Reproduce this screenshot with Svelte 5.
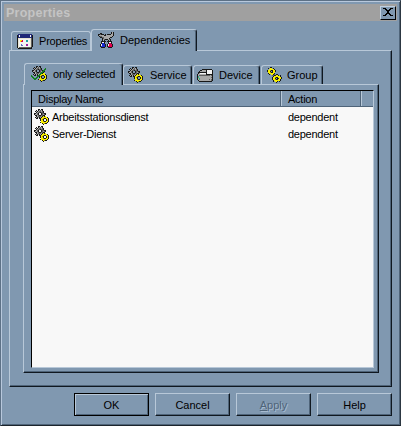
<script>
	// pixel maps for the little old-style icons
	const colors = {
		k: '#181818', g: '#a8a8a8', d: '#606060', w: '#f4f4f4', y: '#f8f000', o: '#a89800',
		v: '#108020', b: '#1828d0', r: '#e00050', n: '#202878', c: '#20a0a0', m: '#a020a0', s: '#e8e4d0',
		l: '#40c060', e: '#6070c0'
	};

	const service = [
		'.....kk.kk......',
		'...k.kgdgk......',
		'..kgkgddgdk.....',
		'...kgddkddk.....',
		'.kkgdk..kddkk...',
		'.kggdk..kdgdk...',
		'..kkgdkkddkk....',
		'...kgdddgkyky...',
		'..kgkgkgkyyyyyk.',
		'...kk.kkyyokkyyk',
		'.......kyok..kyk',
		'.......kyyk..kyk',
		'........yyokkyyk',
		'.......kyyyyyyk.',
		'.........kyokk..',
		'..........k.....'
	];
	const selected = [
		'.....kk.kk......',
		'...k.kgdgk......',
		'..kgkgddgdk...v.',
		'...kgddkddk..vv.',
		'.kkgdk..kddkvv..',
		'.kggdk..kdgvvk..',
		'..kkgdkkddvvk...',
		'...kgdddgvvkyy..',
		'..kgkgkgvvyyyyk.',
		'v..kk.kvvyokkyyk',
		'vv....vvkok..kyk',
		'.vv..vv.kyk..kyk',
		'..vvvv...yokkyyk',
		'...vv..kyyyyyyk.',
		'.........kyokk..',
		'..........k.....'
	];
	const group = [
		'....kk..........',
		'..k.yy.k........',
		'...yyyyyk.......',
		'.kyyokkyyk......',
		'.kyyk.kyyk......',
		'..yyokkyy.......',
		'..kyyyyyk.......',
		'...k.yykd.kk....',
		'......ddkkyyk.k.',
		'.......kyyyyyyk.',
		'......kyyokkyyyk',
		'......kyyk.kkyyk',
		'......kyyokkyyk.',
		'.......kyyyyyyk.',
		'.......k.yyk.k..',
		'..........k.....'
	];
	const device = [
		'.....kkkkkkkkkk.',
		'...kkggggkwwwwwk',
		'..kggggggkwwwwwk',
		'.kkkkkkkkkwwwwwk',
		'.kgwwwwwwkwwwwwk',
		'kggggggggkkkkkkk',
		'kgdddddddddddgdk',
		'kcgggggggggggggk',
		'klggggggggggggdk',
		'kgcggggggggggggk',
		'kglgggggggggdgdk',
		'.kggggggggggggdk',
		'..kkkkkkkkkkkkk.'
	];
	const sheet = [
		'.nnnnnnnnnnnnnn.',
		'knwnnnnnnnnnnwnk',
		'knwnnnnnnnnnnwnk',
		'knnnnnnnnnnnnnnk',
		'ksssssssssssssdk',
		'kswwwwwwwwwwwsdk',
		'kswyyrwwwccwwsdk',
		'kswyrrwwwccwwsdk',
		'kswwwwwwwwwwwsdk',
		'kswwwwwwwwwwwsdk',
		'kswwewwwwmmwwsdk',
		'kswweewwwmmwwsdk',
		'kswwwwwwwwwwwsdk',
		'ksddddddddddddk.',
		'.kkkkkkkkkkkkkk.'
	];
	const tools = [
		'.............kgk',
		'..kk.........kgk',
		'kkdkkk.k.kkkkggk',
		'kgggggkkgggggggk',
		'.kddggggggggggk.',
		'..kkddggggggkk..',
		'....kdgggggk....',
		'....kgdkkkgdk...',
		'....kgk...kgk...',
		'...kkkkk.kkkkk..',
		'...kwwk...kwwk..',
		'...kbbk...krrk..',
		'..kwbbbk.kwrrrk.',
		'..kwbbbk.kwrrrk.',
		'..kbbbbk.krrrrk.',
		'...kkkk...kkkk..'
	];

	function pixels(map) {
		const out = [];
		map.forEach((row, y) => {
			[...row].forEach((ch, x) => {
				if (colors[ch]) out.push({ x, y, fill: colors[ch] });
			});
		});
		return out;
	}

	const rows = [
		{ name: 'Arbeitsstationsdienst', action: 'dependent' },
		{ name: 'Server-Dienst', action: 'dependent' }
	];
	const buttons = [
		{ label: 'OK', isDefault: true },
		{ label: 'Cancel' },
		{ label: 'Apply', disabled: true },
		{ label: 'Help' }
	];
</script>

{#snippet icon(map)}
	<svg class="icon" width={map[0].length} height={map.length} viewBox="0 0 {map[0].length} {map.length}" shape-rendering="crispEdges">
		{#each pixels(map) as p}
			<rect x={p.x} y={p.y} width="1" height="1" fill={p.fill} />
		{/each}
	</svg>
{/snippet}

<div class="window">
	<div class="titlebar">
		<span class="title">Properties</span>
		<button class="close" aria-label="Close">
			<svg width="10" height="9" viewBox="0 0 10 9" shape-rendering="crispEdges">
				<path d="M0 0h3v1h1v1h2v-1h1v-1h3v1h-2v1h-1v1h-1v2h1v1h1v1h2v1h-3v-1h-1v-1h-2v1h-1v1h-3v-1h2v-1h1v-1h1v-2h-1v-1h-1v-1h-2z" fill="#000" />
			</svg>
		</button>
	</div>

	<div class="outer-tabs">
		<div class="tab outer first">{@render icon(sheet)}<span>Properties</span></div>
		<div class="tab outer active">{@render icon(tools)}<span>Dependencies</span></div>
	</div>

	<div class="pane outer-pane">
		<div class="inner-tabs">
			<div class="tab inner active">{@render icon(selected)}<span>only selected</span></div>
			<div class="tab inner service">{@render icon(service)}<span>Service</span></div>
			<div class="tab inner device">{@render icon(device)}<span>Device</span></div>
			<div class="tab inner group">{@render icon(group)}<span>Group</span></div>
		</div>
		<div class="pane inner-pane">
			<div class="list">
				<div class="head">
					<div class="cell col-name">Display Name</div>
					<div class="cell col-action">Action</div>
					<div class="cell col-rest"></div>
				</div>
				<div class="body">
					{#each rows as row}
						<div class="row">
							<div class="col-name row-name">{@render icon(service)}<span>{row.name}</span></div>
							<div class="col-action row-action">{row.action}</div>
						</div>
					{/each}
				</div>
			</div>
		</div>
	</div>

	<div class="buttons">
		{#each buttons as b}
			<button class="btn" class:default={b.isDefault} class:disabled={b.disabled}>
				{#if b.disabled}<span class="u">A</span>pply{:else}{b.label}{/if}
			</button>
		{/each}
	</div>
</div>

<style>
	:global(body) {
		background: #8098b0;
	}

	.window {
		box-sizing: border-box;
		width: 401px;
		height: 426px;
		background: #8098b0;
		border: 1px solid;
		border-color: #5d7186 #2c3742 #1c242c #5d7186;
		box-shadow: inset 1px 1px 0 #b8c8dc, inset -1px -1px 0 #4f6479;
		padding: 3px;
		font-family: "Liberation Sans", Arial, sans-serif;
		font-size: 11px;
		color: #000;
		display: flex;
		flex-direction: column;
	}

	.titlebar {
		height: 17px;
		background: #a0a0a0;
		display: flex;
		align-items: center;
		justify-content: space-between;
		padding: 0 1px 0 2px;
		flex: none;
	}

	.title {
		font-weight: bold;
		font-size: 12.5px;
		letter-spacing: 0.25px;
		color: #c4c4c4;
	}

	.close {
		box-sizing: border-box;
		width: 16px;
		height: 14px;
		padding: 0;
		background: #8098b0;
		border: 1px solid;
		border-color: #c0d0e0 #000 #000 #c0d0e0;
		display: flex;
		align-items: center;
		justify-content: center;
	}

	.outer-tabs {
		display: flex;
		align-items: flex-end;
		height: 29px;
		padding-left: 7px;
		flex: none;
	}

	.tab {
		box-sizing: border-box;
		display: flex;
		align-items: center;
		background: #8098b0;
		border: 1px solid;
		border-color: #b8c8d8 #101820 transparent #b8c8d8;
		border-bottom: none;
		border-radius: 3px 3px 0 0;
		white-space: nowrap;
		box-shadow: inset -1px 0 0 #4f6479;
	}

	.tab span {
		margin-left: 6px;
	}

	.tab.outer {
		height: 19px;
		padding-left: 5px;
	}

	.tab.outer.first {
		width: 80px;
		border-right-color: #b8c8d8;
		box-shadow: none;
	}

	.tab.outer.first span {
		letter-spacing: -0.2px;
	}

	.tab.outer.active {
		height: 22px;
		width: 106px;
		margin-bottom: -1px;
		z-index: 1;
		padding-left: 6px;
		padding-bottom: 2px;
	}

	.pane {
		box-sizing: border-box;
		border: 1px solid;
		border-color: #b8c8d8 #101820 #101820 #b8c8d8;
		box-shadow: inset -1px -1px 0 #4f6479;
	}

	.outer-pane {
		width: 383px;
		height: 337px;
		margin-left: 5px;
		padding: 11px 12px 0 13px;
		flex: none;
	}

	.inner-tabs {
		display: flex;
		align-items: flex-end;
		height: 22px;
		padding-left: 1px;
	}

	.tab.inner {
		height: 19px;
		padding-left: 3px;
	}

	.tab.inner.active {
		height: 22px;
		width: 99px;
		padding-left: 6px;
		margin-bottom: -1px;
		z-index: 1;
		padding-bottom: 2px;
		letter-spacing: -0.15px;
	}

	.tab.inner.service {
		width: 69px;
	}

	.tab.inner.service span {
		margin-left: 7px;
	}

	.tab.inner.device {
		width: 67px;
		margin-left: 1px;
	}

	.tab.inner.group {
		width: 62px;
		margin-left: 1px;
		padding-left: 4px;
	}

	.tab.inner.group span {
		margin-left: 5px;
	}

	.inner-pane {
		width: 356px;
		height: 289px;
		padding: 5px 4px 4px 7px;
		background: #8098b0;
	}

	.list {
		box-sizing: border-box;
		height: 100%;
		display: flex;
		flex-direction: column;
		border: 1px solid;
		border-color: #000 #b8c8d8 #b8c8d8 #000;
		background: #f8f8f8;
		letter-spacing: -0.25px;
	}

	.head {
		display: flex;
		height: 15px;
		background: #8098b0;
		flex: none;
		border-bottom: 1px solid #4f6479;
	}

	.cell {
		box-sizing: border-box;
		padding-left: 6px;
		line-height: 17px;
		border-right: 1px solid #4f6479;
		box-shadow: 1px 0 0 #b8c8d8;
	}

	.col-name {
		width: 249px;
		flex: none;
	}

	.col-action {
		width: 80px;
		flex: none;
		padding-left: 7px;
	}

	.col-rest {
		flex: 1;
		border-right: none;
		box-shadow: none;
	}

	.body {
		flex: 1;
		padding-top: 1px;
	}

	.row {
		display: flex;
		height: 17px;
		align-items: center;
	}

	.row-name {
		display: flex;
		align-items: center;
		padding-left: 1px;
		gap: 3px;
	}

	.row-action {
		padding-left: 6px;
	}

	.buttons {
		display: flex;
		justify-content: flex-end;
		gap: 6px;
		padding: 6px 5px 0 0;
	}

	.btn {
		box-sizing: border-box;
		width: 75px;
		height: 23px;
		padding: 0;
		background: #8098b0;
		font: inherit;
		color: #000;
		border: 1px solid;
		border-color: #b8c8d8 #101820 #101820 #b8c8d8;
		box-shadow: inset -1px -1px 0 #4f6479;
	}

	.btn.default {
		border-color: #000;
		box-shadow: inset 1px 1px 0 #b8c8d8, inset -1px -1px 0 #4f6479;
	}

	.btn.disabled {
		color: #4f6479;
		text-shadow: 1px 1px 0 #a8bcd0;
	}

	.u {
		text-decoration: underline;
	}
</style>
